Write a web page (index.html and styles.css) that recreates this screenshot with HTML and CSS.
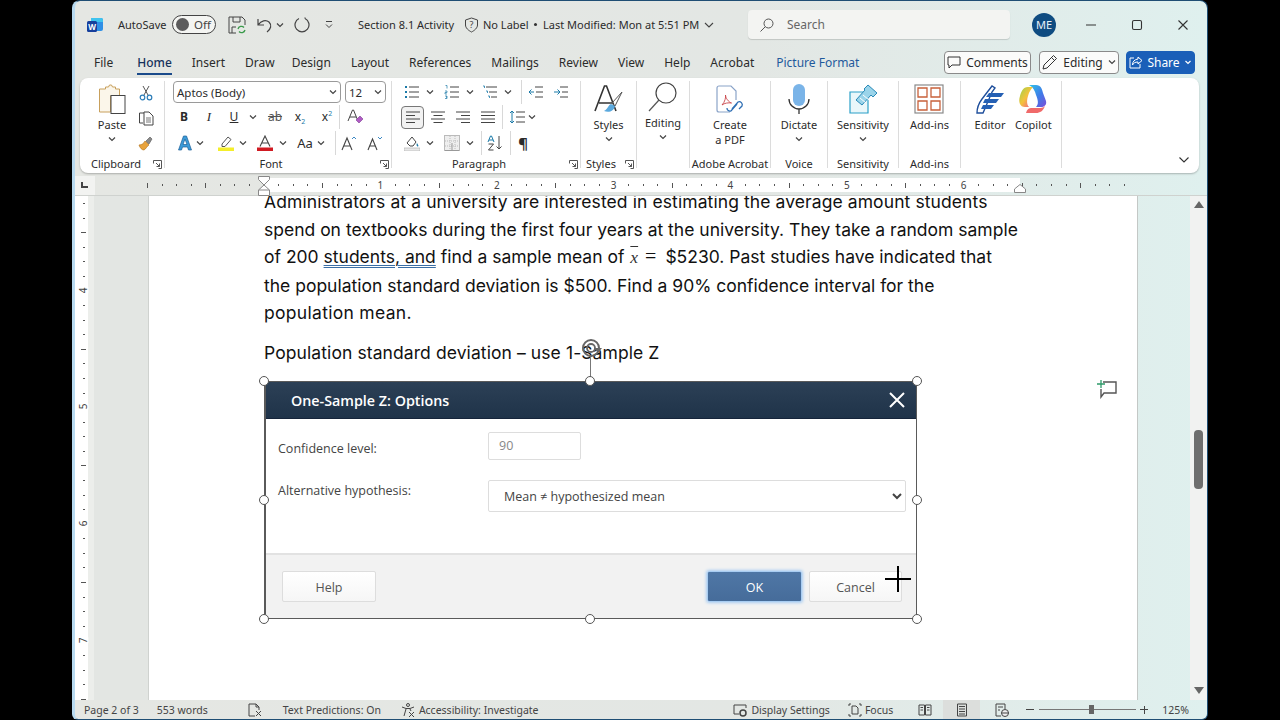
FILE: index.html
```html
<!DOCTYPE html>
<html>
<head>
  <meta charset="utf-8">
  <title>Section 8.1 Activity - Word</title>
  <link rel="stylesheet" href="styles.css">
</head>
<body>
  <svg class="sprite" aria-hidden="true">
    <defs>
      <linearGradient id="copA" x1="0" y1="0" x2="1" y2="1"><stop offset="0" stop-color="#2fc4e8"/><stop offset="0.55" stop-color="#3f7be8"/><stop offset="1" stop-color="#7a4fd8"/></linearGradient>
      <linearGradient id="copB" x1="0" y1="0" x2="1" y2="1"><stop offset="0" stop-color="#9ad34a"/><stop offset="0.5" stop-color="#f5c23c"/><stop offset="1" stop-color="#f0509a"/></linearGradient>
    </defs>
    <symbol id="chev" viewBox="0 0 8 8"><path d="M1 2.500l3 3 3-3" fill="none" stroke="#444" stroke-width="1.200"/></symbol>
    <symbol id="alignL" viewBox="0 0 16 16"><path d="M1 3h14M1 6.500h9M1 10h14M1 13.500h9" stroke="#444" fill="none"/></symbol>
    <symbol id="alignC" viewBox="0 0 16 16"><path d="M1 3h14M3.500 6.500h9M1 10h14M3.500 13.500h9" stroke="#444" fill="none"/></symbol>
    <symbol id="alignR" viewBox="0 0 16 16"><path d="M1 3h14M6 6.500h9M1 10h14M6 13.500h9" stroke="#444" fill="none"/></symbol>
    <symbol id="alignJ" viewBox="0 0 16 16"><path d="M1 3h14M1 6.500h14M1 10h14M1 13.500h14" stroke="#444" fill="none"/></symbol>
    <symbol id="launcher" viewBox="0 0 9 9"><path d="M.5 3.500v-3h8v8h-3M3 3l3.500 3.500M6.500 3.500v3h-3" fill="none" stroke="#555"/></symbol>
  </svg>

  <div class="window">
    <div class="titlebar">
      <svg class="word-logo" viewBox="0 0 16 16">
        <path d="M4 1h10a2 2 0 0 1 2 2v9a2 2 0 0 1-2 2H4z" fill="#2f8fe6"/>
        <path d="M4 1h10a2 2 0 0 1 2 2v2H4z" fill="#3fc3ee"/>
        <rect x="0" y="4" width="10" height="11" rx="1.500" fill="#17409c"/>
        <text x="5" y="12.500" class="word-w">W</text>
      </svg>
      <span class="autosave">AutoSave</span>
      <span class="toggle"><i class="knob"></i>Off</span>
      <svg class="save-ico" viewBox="0 0 18 18"><path d="M1 1h13l3 3v5M1 1v16h7M5 1v5h7V1M4 17v-6h4" fill="none" stroke="#444"/><path d="M10 13a3.500 3.500 0 0 1 6-1.500M17 14a3.500 3.500 0 0 1-6 1.500" fill="none" stroke="#3a9a4a" stroke-width="1.300"/></svg>
      <svg class="undo-ico" viewBox="0 0 16 16"><path d="M1 2v6h6M1.500 7.500C4 3.500 9 2.500 12 5c3 3 2 7-2 10" fill="none" stroke="#444" stroke-width="1.200"/></svg>
      <svg class="chev ml3"><use href="#chev"/></svg>
      <svg class="redo-ico" viewBox="0 0 16 16"><path d="M5 1.500A7 7 0 1 0 11 1.500M11 1.500V.5" fill="none" stroke="#444" stroke-width="1.200"/></svg>
      <svg class="custom-ico" viewBox="0 0 10 10"><path d="M2 1.500h6M2 4.500l3 3 3-3" fill="none" stroke="#444"/></svg>
      <span class="doc-name">Section 8.1 Activity</span>
      <svg class="shield" viewBox="0 0 15 16"><path d="M7.500 1l6 2v5c0 3-3 5.500-6 7-3-1.500-6-4-6-7V3z" fill="none" stroke="#444"/><text x="7.500" y="11" class="shield-q">?</text></svg>
      <span class="no-label">No Label</span>
      <span class="dot"></span>
      <span class="modified">Last Modified: Mon at 5:51 PM</span>
      <svg class="modified-chev" viewBox="0 0 10 8"><path d="M1 2l4 4 4-4" fill="none" stroke="#444" stroke-width="1.100"/></svg>
      <div class="search">
        <svg class="search-ico" viewBox="0 0 14 14"><circle cx="8.500" cy="5.500" r="4.500" fill="none" stroke="#555"/><path d="M5.300 8.700L.5 13.500" stroke="#555"/></svg>
        <span>Search</span>
      </div>
      <span class="avatar">ME</span>
      <svg class="win-btn min" viewBox="0 0 12 12"><path d="M1 6h10" stroke="#333" stroke-width="1.100"/></svg>
      <svg class="win-btn max" viewBox="0 0 12 12"><rect x="1.500" y="1.500" width="9" height="9" rx="1.500" fill="none" stroke="#333" stroke-width="1.100"/></svg>
      <svg class="win-btn close" viewBox="0 0 12 12"><path d="M1.500 1.500l9 9M10.500 1.500l-9 9" stroke="#333" stroke-width="1.100"/></svg>
    </div>

    <div class="tabs">
      <span class="tab">File</span>
      <span class="tab active">Home</span>
      <span class="tab">Insert</span>
      <span class="tab">Draw</span>
      <span class="tab design">Design</span>
      <span class="tab">Layout</span>
      <span class="tab">References</span>
      <span class="tab">Mailings</span>
      <span class="tab">Review</span>
      <span class="tab">View</span>
      <span class="tab">Help</span>
      <span class="tab">Acrobat</span>
      <span class="tab context">Picture Format</span>
      <div class="tab-actions">
        <button class="action comments">
          <svg viewBox="0 0 14 14"><path d="M1 2h12v8H5l-3 3v-3H1z" fill="none" stroke="#333"/></svg>Comments
        </button>
        <button class="action editing">
          <svg viewBox="0 0 16 16"><path d="M11.500 1.500l3 3L5 14l-4 1 1-4zM9.500 3.500l3 3" fill="none" stroke="#333"/></svg>Editing<svg class="chev"><use href="#chev"/></svg>
        </button>
        <button class="action share">
          <svg viewBox="0 0 14 14"><path d="M9 2l4 3.500L9 9V7C6 7 4.500 8 3.500 10 3.500 6.500 5.500 4.500 9 4zM5 3H1v10h10V9" fill="none" stroke="#fff"/></svg>Share<svg class="chev" viewBox="0 0 8 8"><path d="M1.500 3l2.500 2.500L6.500 3" fill="none" stroke="#fff" stroke-width="1.200"/></svg>
        </button>
      </div>
    </div>

    <div class="ribbon">
      <div class="group clipboard">
        <div class="group-body clip-body">
          <div class="big paste">
            <svg class="paste-ico" viewBox="0 0 28 30">
              <path d="M1.500 5h6v-2h3l1-2h2l1 2h3v2h4v7h-9v16h-11z" fill="#fbf6ea" stroke="#c8a05c"/>
              <rect x="13" y="11.500" width="14" height="18" fill="#fff" stroke="#444"/>
            </svg>
            <span>Paste</span>
            <svg class="chev"><use href="#chev"/></svg>
          </div>
          <div class="clip-tools">
            <svg class="tool-ico" viewBox="0 0 16 16"><path d="M5 1l5 9M11 1l-5 9" stroke="#555" fill="none"/><circle cx="4.500" cy="12.500" r="2.300" fill="none" stroke="#2b7cb8" stroke-width="1.200"/><circle cx="11.500" cy="12.500" r="2.300" fill="none" stroke="#2b7cb8" stroke-width="1.200"/></svg>
            <svg class="tool-ico" viewBox="0 0 16 16"><path d="M6 3H1.500v10H5M6 2h5l4 4v9H6z" fill="#fff" stroke="#444"/><path d="M8 8h5M8 10h5M8 12h5" stroke="#777"/></svg>
            <svg class="tool-ico" viewBox="0 0 16 16"><path d="M1 10c3 0 5-2 6-4l4 4c-2 1-3 4-5 5-2 0-4-2-5-5z" fill="#e8a33d" stroke="#b87a24" stroke-width=".7"/><path d="M8 6l4-4 2 2-3 5z" fill="#8a8a8a" stroke="#555" stroke-width=".6"/></svg>
          </div>
        </div>
        <div class="group-label">Clipboard<svg class="launcher"><use href="#launcher"/></svg></div>
      </div>

      <div class="group font">
        <div class="group-body stack">
          <div class="row first font-pickers">
            <div class="picker font-name">Aptos (Body)<svg class="chev"><use href="#chev"/></svg></div>
            <div class="picker font-size">12<svg class="chev"><use href="#chev"/></svg></div>
          </div>
          <div class="row">
            <b class="gl ml13">B</b>
            <i class="gl serif ml13">I</i>
            <u class="gl ml13">U</u>
            <svg class="chev ml9"><use href="#chev"/></svg>
            <s class="gl wide ml8">ab</s>
            <span class="gl ml9">x<sub>2</sub></span>
            <span class="gl ml15">x<sup>2</sup></span>
            <span class="tool-sep ml6"></span>
            <svg class="tool-ico ml7" viewBox="0 0 16 16"><path d="M1 12L5.500 1h1L11 12M3 8h6" fill="none" stroke="#444"/><path d="M9 11l4-4 3 3-4 4z" fill="#b05bc4" stroke="#7a3a90" stroke-width=".6"/></svg>
          </div>
          <div class="row">
            <svg class="tool-ico ml12" viewBox="0 0 16 16"><path d="M1.500 15L6.500 1h3l5 14h-3l-1-3h-5l-1 3zM6 9.500h4L8 4z" fill="#3b9bd8" stroke="#1c5f98" stroke-width=".7"/></svg>
            <svg class="chev ml3"><use href="#chev"/></svg>
            <svg class="tool-ico ml14" viewBox="0 0 16 16"><path d="M4 9l6-7 3 2.500-6 7H4z" fill="none" stroke="#555"/><rect x="0" y="12.500" width="16" height="3.500" fill="#f4ee2a"/></svg>
            <svg class="chev ml5"><use href="#chev"/></svg>
            <svg class="tool-ico ml10" viewBox="0 0 16 16"><path d="M3 11.500L8 1l5 10.500M4.800 8h6.400" fill="none" stroke="#444" stroke-width="1.100"/><rect x="0" y="12.500" width="16" height="3.500" fill="#d01a22"/></svg>
            <svg class="chev ml6"><use href="#chev"/></svg>
            <span class="gl case ml9">Aa</span>
            <svg class="chev ml3"><use href="#chev"/></svg>
            <span class="tool-sep ml10"></span>
            <svg class="tool-ico ml5" viewBox="0 0 16 16"><path d="M1 15L6 3l5 12M3 11h6" fill="none" stroke="#444" stroke-width="1.100"/><path d="M11 4l2-2 2 2" fill="none" stroke="#3b88c4"/></svg>
            <svg class="tool-ico ml10" viewBox="0 0 16 16"><path d="M1 15L5.500 4 10 15M3 11h5" fill="none" stroke="#444" stroke-width="1.100"/><path d="M11 2l2 2 2-2" fill="none" stroke="#3b88c4"/></svg>
          </div>
        </div>
        <div class="group-label">Font<svg class="launcher"><use href="#launcher"/></svg></div>
      </div>

      <div class="group paragraph">
        <div class="group-body stack">
          <div class="row first">
            <svg class="tool-ico ml12" viewBox="0 0 16 16"><path d="M5 3h10M5 8h10M5 13h10" stroke="#444"/><path d="M1 2h2v2H1zM1 7h2v2H1zM1 12h2v2H1z" fill="#1b7aa8"/></svg>
            <svg class="chev ml6"><use href="#chev"/></svg>
            <svg class="tool-ico ml10" viewBox="0 0 16 16"><path d="M6 3h9M6 8h9M6 13h9" stroke="#444"/><path d="M1.500 1.500h1.500v3M1 7h2v1.500H1V10h2M1 12h2v1h-1 1v1.500H1" fill="none" stroke="#1b7aa8" stroke-width=".7"/></svg>
            <svg class="chev ml6"><use href="#chev"/></svg>
            <svg class="tool-ico ml8" viewBox="0 0 16 16"><path d="M4 3h11M7 8h8M9 13h6" stroke="#444"/><path d="M1 2h1.500v2M4 7h1.500v2M6 12h1.500v2" fill="none" stroke="#1b7aa8" stroke-width=".8"/></svg>
            <svg class="chev ml6"><use href="#chev"/></svg>
            <span class="tool-sep ml9"></span>
            <svg class="tool-ico ml6" viewBox="0 0 16 16"><path d="M7 3h8M8 8h7M7 13h8" stroke="#444"/><path d="M6 8H1M3.500 5.500L1 8l2.500 2.500" fill="none" stroke="#1b7aa8"/></svg>
            <svg class="tool-ico ml9" viewBox="0 0 16 16"><path d="M7 3h8M9 8h6M7 13h8" stroke="#444"/><path d="M1 8h6M4.500 5.500L7 8l-2.500 2.500" fill="none" stroke="#1b7aa8"/></svg>
          </div>
          <div class="row">
            <span class="selected-tool ml9"><svg class="tool-ico"><use href="#alignL"/></svg></span>
            <svg class="tool-ico ml6"><use href="#alignC"/></svg>
            <svg class="tool-ico ml9"><use href="#alignR"/></svg>
            <svg class="tool-ico ml9"><use href="#alignJ"/></svg>
            <span class="tool-sep ml6"></span>
            <svg class="tool-ico ml6" viewBox="0 0 16 16"><path d="M7 3h9M7 8h9M7 13h9" stroke="#444"/><path d="M3 2v12M1 4l2-2 2 2M1 12l2 2 2-2" fill="none" stroke="#1b7aa8"/></svg>
            <svg class="chev ml3"><use href="#chev"/></svg>
          </div>
          <div class="row">
            <svg class="tool-ico ml12" viewBox="0 0 16 16"><path d="M3 8l5-6 4 5-3 4H6z" fill="#fff" stroke="#444"/><path d="M13 8c1 2 2 3 1 3.500S12 10 13 8z" fill="#1b7aa8"/><rect x="0" y="13" width="16" height="3" fill="#e8e8e8" stroke="#aaa" stroke-width=".6"/></svg>
            <svg class="chev ml6"><use href="#chev"/></svg>
            <svg class="tool-ico ml10" viewBox="0 0 16 16"><rect x=".5" y=".5" width="15" height="15" fill="#eee" stroke="#bbb"/><path d="M1 6h14M1 11h14M6 1v14M11 1v14" stroke="#bbb" stroke-dasharray="1 1"/><path d="M1 15.500h14M8 8v7" stroke="#999"/></svg>
            <svg class="chev ml6"><use href="#chev"/></svg>
            <span class="tool-sep ml7"></span>
            <svg class="tool-ico ml5" viewBox="0 0 16 16"><path d="M12 1v13M9.500 11.500L12 14l2.500-2.500" fill="none" stroke="#444"/><path d="M1 7l2.500-6h1L7 7M2 5h4" fill="none" stroke="#1b7aa8"/><path d="M1.500 9h5l-5 6h5" fill="none" stroke="#444"/></svg>
            <span class="tool-sep ml7"></span>
            <span class="gl pilcrow ml6">¶</span>
          </div>
        </div>
        <div class="group-label">Paragraph<svg class="launcher"><use href="#launcher"/></svg></div>
      </div>

      <div class="group styles">
        <div class="group-body">
          <div class="big">
            <svg class="big-ico" viewBox="0 0 30 30">
              <path d="M1 27L10.500 2h2L22 27M5 19h13" fill="none" stroke="#333" stroke-width="1.600"/>
              <path d="M28 8L18 19l3 3z" fill="none" stroke="#555"/>
              <path d="M17 20c-3 1-3 5-7 7 5 2 10 0 11-5z" fill="#5aa9de"/>
            </svg>
            <span>Styles</span>
            <svg class="chev"><use href="#chev"/></svg>
          </div>
        </div>
        <div class="group-label label-left">Styles<svg class="launcher"><use href="#launcher"/></svg></div>
      </div>

      <div class="group editing-group">
        <div class="group-body">
          <div class="big raise">
            <svg class="big-ico" viewBox="0 0 30 30"><circle cx="18" cy="11" r="10" fill="#fff" stroke="#444" stroke-width="1.200"/><path d="M11 18L1 29" stroke="#555" stroke-width="1.200"/></svg>
            <span>Editing</span>
            <svg class="chev"><use href="#chev"/></svg>
          </div>
        </div>
        <div class="group-label"></div>
      </div>

      <div class="group acrobat">
        <div class="group-body">
          <div class="big">
            <svg class="big-ico" viewBox="0 0 30 30">
              <path d="M2 4a2 2 0 0 1 2-2h12l5 5v9M2 4v22a2 2 0 0 0 2 2h11" fill="none" stroke="#8aa3c8" stroke-width="1.200"/>
              <path d="M7 21c3-3 4-8 3.500-10 0 3 3 7 6 8-3-.5-7 0-9.500 2z" fill="none" stroke="#c8454a" stroke-width=".9"/>
              <path d="M17 25l6-7a3 3 0 0 1 4 4l-3 3M22 20l-6 7a3 3 0 0 1-4-3" fill="none" stroke="#2f6fb4" stroke-width="1.300"/>
            </svg>
            <span>Create<br>a PDF</span>
          </div>
        </div>
        <div class="group-label">Adobe Acrobat</div>
      </div>

      <div class="group voice">
        <div class="group-body">
          <div class="big">
            <svg class="big-ico" viewBox="0 0 30 30">
              <rect x="9" y="0" width="12" height="22" rx="6" fill="#7ab4e8"/>
              <path d="M5 15a10 10 0 0 0 20 0M15 25v5" fill="none" stroke="#333" stroke-width="1.300"/>
            </svg>
            <span>Dictate</span>
            <svg class="chev"><use href="#chev"/></svg>
          </div>
        </div>
        <div class="group-label">Voice</div>
      </div>

      <div class="group sensitivity">
        <div class="group-body">
          <div class="big">
            <svg class="big-ico" viewBox="0 0 30 30">
              <path d="M20 8H2v21h18V15" fill="#eaf7fa" stroke="#2aa0c8" stroke-width="1.200"/>
              <path d="M20 1l9 8-4 4-2-2-9 10-6-5 9-10-1-1z" fill="#9ad4ea" stroke="#2a8ab8"/>
              <path d="M12 14l6 5M15 11l6 5" stroke="#fff"/>
            </svg>
            <span>Sensitivity</span>
            <svg class="chev"><use href="#chev"/></svg>
          </div>
        </div>
        <div class="group-label">Sensitivity</div>
      </div>

      <div class="group addins">
        <div class="group-body">
          <div class="big">
            <svg class="big-ico" viewBox="0 0 30 30">
              <rect x="1" y="1" width="28" height="28" fill="#fff" stroke="#8a8a8a" stroke-width="1.200"/>
              <path d="M4 4h9v9H4zM17 4h9v9h-9zM4 17h9v9H4zM17 17h9v9h-9z" fill="#fff" stroke="#c8603a" stroke-width="1.300"/>
            </svg>
            <span>Add-ins</span>
          </div>
        </div>
        <div class="group-label">Add-ins</div>
      </div>

      <div class="group tools-end">
        <div class="group-body end-body">
          <div class="big">
            <svg class="big-ico" viewBox="0 0 30 30">
              <path d="M2 29c0-6 2-10 5-14l10-13 3 2-3 4-9 21z" fill="#fff" stroke="#1f4f9c" stroke-width="1.400"/>
              <path d="M14 9h15l-3 4H11zM10 15h14l-3 4H8zM8 21h11l-3 4H6z" fill="#2560b4"/>
            </svg>
            <span>Editor</span>
          </div>
          <div class="big">
            <svg class="big-ico" viewBox="0 0 30 30">
              <path d="M11 1h7c5 0 6 4 7 8l3 8c1 4-2 6-5 6h-5c3-3 2-7 0-12-1-4-3-8-7-10z" fill="url(#copA)"/>
              <path d="M10 3C5 3 3 8 2 12c-2 6 0 11 5 11h4c-3-3-2-9 0-14 1-2 2-4 4-6z" fill="url(#copB)"/>
              <path d="M8 29h10c4 0 7-2 9-7-2 2-4 2-7 2h-6c-3 0-5 1-6 5z" fill="#f06a6a"/>
            </svg>
            <span>Copilot</span>
          </div>
        </div>
        <div class="group-label"></div>
      </div>
      <svg class="collapse" viewBox="0 0 12 8"><path d="M1.500 1.500L6 6l4.500-4.500" fill="none" stroke="#333" stroke-width="1.100"/></svg>
    </div>

    <div class="ruler">
      <div class="ruler-corner"><i class="tab-stop"></i></div>
      <div class="ruler-track">
        <div class="ruler-scale">
          <span><em>1</em></span><span><em>2</em></span><span><em>3</em></span><span><em>4</em></span><span><em>5</em></span><span><em>6</em></span>
        </div>
        <svg class="indent-left" viewBox="0 0 12 20"><path d="M.5.5h11v3L6 9 .5 3.500zM6 9l5.500 5v5.500H.5V14zM.5 14h11" fill="#fff" stroke="#888"/></svg>
        <svg class="indent-right" viewBox="0 0 12 9"><path d="M6 .5l5.500 4.500v3.500H.5V5z" fill="#fff" stroke="#888"/></svg>
      </div>
    </div>

    <div class="doc-area">
      <div class="vruler">
        <div class="vruler-scale">
          <span><em>4</em></span><span><em>5</em></span><span><em>6</em></span><span><em>7</em></span>
        </div>
      </div>
      <div class="gutter"></div>
      <div class="page">
        <p class="para">Administrators at a university are interested in estimating the average amount students<br>
        spend on textbooks during the first four years at the university. They take a random sample<br>
        of 200 <span class="grammar">students, and</span> find a sample mean of <span class="math"><i class="xbar">x</i><span class="eq">=</span></span>$5230. Past studies have indicated that<br>
        the population standard deviation is $500. Find a 90% confidence interval for the<br>
        <span class="last-line">population mean.</span></p>
        <p class="para second">Population standard deviation – use 1-Sample Z</p>

        <div class="picture">
          <div class="dialog">
            <div class="dialog-head">
              <span>One-Sample Z: Options</span>
              <svg viewBox="0 0 16 16"><path d="M1 1l14 14M15 1L1 15" stroke="#fff" stroke-width="2"/></svg>
            </div>
            <div class="dialog-body">
              <div class="field">
                <label>Confidence level:</label>
                <input class="level" type="text" value="90">
              </div>
              <div class="field field-alt">
                <label>Alternative hypothesis:</label>
                <select class="alt"><option>Mean ≠ hypothesized mean</option></select>
              </div>
            </div>
            <div class="dialog-foot">
              <button class="dlg-btn">Help</button>
              <button class="dlg-btn ok">OK</button>
              <button class="dlg-btn cancel">Cancel</button>
            </div>
          </div>
          <span class="rot-line"></span>
          <svg class="rot-handle" viewBox="0 0 22 22"><circle cx="10" cy="10" r="8" fill="none" stroke="#666" stroke-width="2"/><circle cx="10" cy="10" r="4" fill="none" stroke="#666" stroke-width="1.800"/><path d="M13 10h8l-4 5z" fill="#666"/></svg>
          <i class="handle tl"></i><i class="handle tc"></i><i class="handle tr"></i>
          <i class="handle ml"></i><i class="handle mr"></i>
          <i class="handle bl"></i><i class="handle bc"></i><i class="handle br"></i>
          <svg class="cursor" viewBox="0 0 26 26"><path d="M13 0v26M0 13h26" stroke="#000" stroke-width="2"/></svg>
        </div>
        <svg class="add-comment" viewBox="0 0 20 20"><path d="M6 3h13v11H7l-3 4v-8" fill="none" stroke="#555" stroke-width="1.400"/><path d="M4 1v8M0 5h8" stroke="#2e9a6a" stroke-width="1.300"/></svg>
      </div>
      <div class="side-pane"></div>
      <div class="scrollbar">
        <i class="arrow up"></i>
        <div class="scroll-track"><i class="thumb"></i></div>
        <i class="arrow down"></i>
      </div>
    </div>

    <div class="statusbar">
      <span class="st-page">Page 2 of 3</span>
      <span class="st-words">553 words</span>
      <svg class="st-ico st-proof" viewBox="0 0 14 14"><path d="M7 13H1V1h7l3 3v3M8 1v3h3" fill="none" stroke="#444"/><path d="M8 8l5 5M13 8l-5 5" stroke="#444"/></svg>
      <span class="st-pred">Text Predictions: On</span>
      <svg class="st-ico st-acc" viewBox="0 0 14 14"><circle cx="7" cy="2" r="1.500" fill="none" stroke="#444"/><path d="M1 4l4 1.500h4L13 4M5 6l-2 7M9 6l1 2" fill="none" stroke="#444"/><path d="M8 9l5 5M13 9l-5 5" stroke="#444"/></svg>
      <span class="st-acc-text">Accessibility: Investigate</span>
      <div class="st-right">
        <svg class="st-ico" viewBox="0 0 14 14"><path d="M1 11V2h12v3M1 11h5" fill="none" stroke="#444"/><circle cx="10" cy="10" r="3" fill="none" stroke="#444" stroke-width="1.500"/></svg>
        <span class="st-display">Display Settings</span>
        <svg class="st-ico st-focus" viewBox="0 0 14 14"><path d="M1 3V1h2M11 1h2v2M1 11v2h2M11 13h2v-2M4 3h4l2 2v6H4z" fill="none" stroke="#444"/></svg>
        <span class="st-focus-text">Focus</span>
        <svg class="st-ico st-read" viewBox="0 0 14 14"><path d="M1 2h5.500v10H1zM7.500 2H13v10H7.500z" fill="none" stroke="#444"/><path d="M2.500 4.500h2.500M2.500 7h2.500M9 4.500h2.500M9 7h2.500" stroke="#444"/></svg>
        <span class="st-print"><svg class="st-ico" viewBox="0 0 14 14"><path d="M2.500 1h9v12h-9z" fill="none" stroke="#444"/><path d="M4 3.500h6M4 6h6M4 8.500h6M4 11h6" stroke="#444"/></svg></span>
        <svg class="st-ico st-web" viewBox="0 0 14 14"><path d="M6 13H1V1h9v5M3 4h5M3 7h2" fill="none" stroke="#444"/><circle cx="10" cy="10" r="3.500" fill="#eee" stroke="#444"/><path d="M6.500 10h7" stroke="#444"/></svg>
        <span class="zoom-minus"></span>
        <div class="zoom-slider"><i></i></div>
        <span class="zoom-plus"></span>
        <span class="zoom-pct">125%</span>
      </div>
    </div>
  </div>
</body>
</html>
```

FILE: styles.css
```css
* {
  margin: 0;
  padding: 0;
  box-sizing: border-box;
}
body {
  width: 1280px;
  height: 720px;
  background: #000;
  font-family: "Noto Sans", "Open Sans", sans-serif;
  font-size: 12px;
  color: #2b2b2b;
  overflow: hidden;
}
.sprite {
  position: absolute;
  width: 0;
  height: 0;
}
.window {
  width: 1136px;
  height: 720px;
  margin-left: 72px;
  display: flex;
  flex-direction: column;
  overflow: hidden;
  background: linear-gradient(90deg, #e5e7e3, #e3e7e4 60%, #dff0ee);
  border-top: 1px solid #1f4e74;
  border-left: 3px solid #b8daf0;
  border-right: 1px solid #1f4e74;
  border-bottom: 1px solid #1f4e74;
  border-radius: 8px 8px 6px 6px;
}
svg {
  display: block;
  flex: none;
}
.chev {
  width: 8px;
  height: 8px;
}
.ml3 { margin-left: 3px; }
.ml5 { margin-left: 5px; }
.ml6 { margin-left: 6px; }
.ml7 { margin-left: 7px; }
.ml8 { margin-left: 8px; }
.ml9 { margin-left: 9px; }
.ml10 { margin-left: 10px; }
.ml12 { margin-left: 12px; }
.ml13 { margin-left: 13px; }
.ml14 { margin-left: 14px; }
.ml15 { margin-left: 15px; }

/* title bar */
.titlebar {
  height: 47px;
  flex: none;
  display: flex;
  align-items: center;
  padding-left: 12px;
  font-size: 11px;
  white-space: nowrap;
}
.titlebar span {
  flex: none;
}
.word-logo {
  width: 16px;
  height: 16px;
}
.word-w {
  font-size: 8px;
  font-weight: 700;
  fill: #fff;
  text-anchor: middle;
}
.autosave {
  margin-left: 15px;
  width: 54px;
}
.toggle {
  width: 44px;
  height: 19px;
  border: 1px solid #444;
  border-radius: 10px;
  background: #f4f5f2;
  display: flex;
  align-items: center;
  padding-left: 3px;
  gap: 5px;
  font-size: 11.5px;
  color: #444;
}
.knob {
  width: 13px;
  height: 13px;
  border-radius: 50%;
  background: #5c5c5c;
}
.save-ico { width: 18px; height: 18px; margin-left: 12px; }
.undo-ico { width: 16px; height: 16px; margin-left: 11px; }
.redo-ico { width: 16px; height: 16px; margin-left: 10px; }
.custom-ico { width: 10px; height: 10px; margin-left: 14px; }
.doc-name { margin-left: 24px; width: 97px; }
.shield {
  width: 15px;
  height: 16px;
  margin-left: 9px;
}
.shield-q {
  font-size: 9px;
  fill: #444;
  text-anchor: middle;
}
.no-label { margin-left: 4px; width: 45px; }
.dot {
  width: 3px;
  height: 3px;
  border-radius: 50%;
  background: #333;
  margin-left: 6px;
}
.modified { margin-left: 6px; width: 156px; }
.modified-chev {
  width: 10px;
  height: 8px;
  margin-left: 5px;
}
.search {
  width: 262px;
  height: 29px;
  flex: none;
  margin-left: 34px;
  background: #f3f4f2;
  border-radius: 4px;
  box-shadow: 0 1px 1px rgba(0, 0, 0, 0.15);
  display: flex;
  align-items: center;
  padding-left: 12px;
  color: #666;
  font-size: 12px;
}
.search-ico {
  width: 14px;
  height: 14px;
  margin-right: 13px;
}
.avatar {
  width: 24px;
  height: 24px;
  margin-left: 22px;
  border-radius: 50%;
  background: #0f4c81;
  color: #e8f0f8;
  font-size: 11px;
  display: flex;
  align-items: center;
  justify-content: center;
}
.win-btn {
  width: 12px;
  height: 12px;
}
.min { margin-left: 29px; }
.max { margin-left: 34px; }
.close { margin-left: 34px; }

/* tabs */
.tabs {
  height: 28px;
  flex: none;
  display: flex;
  align-items: center;
  gap: 20px;
  padding-left: 19px;
}
.tab {
  position: relative;
  white-space: nowrap;
}
.tab.active {
  color: #16325c;
  font-weight: 500;
  margin-left: 4px;
}
.tab.active::after {
  content: "";
  position: absolute;
  left: 0;
  right: 0;
  bottom: -4px;
  height: 2px;
  background: #1a4a8a;
}
.tab.design { margin-left: -3px; }
.tab.context {
  color: #1f5a9c;
  margin-left: 2px;
}
.tab-actions {
  display: flex;
  gap: 8px;
  margin-left: auto;
  margin-right: 12px;
}
.action {
  height: 23px;
  display: flex;
  align-items: center;
  justify-content: center;
  gap: 5px;
  border: 1px solid #8a8a8a;
  border-radius: 4px;
  background: #fbfbfa;
  font: inherit;
  color: #2b2b2b;
}
.action.comments { width: 87px; }
.action.editing { width: 80px; }
.action.share { width: 69px; }
.action svg:first-child {
  width: 14px;
  height: 14px;
}
.action.editing svg:first-child {
  width: 16px;
  height: 16px;
}
.action .chev {
  width: 8px;
  height: 8px;
}
.action.share {
  margin-left: -1px;
  background: #1a5fb8;
  border-color: #1a5fb8;
  color: #fff;
  gap: 4px;
}

/* ribbon */
.ribbon {
  position: relative;
  height: 95px;
  flex: none;
  margin: 2px 8px 3px 5px;
  padding: 3px 0 5px;
  background: #fff;
  border-radius: 8px;
  box-shadow: 0 1px 2px rgba(0, 0, 0, 0.25);
  display: flex;
  font-size: 11px;
}
.group {
  display: flex;
  flex-direction: column;
  border-right: 1px solid #dcdcdc;
  flex: none;
}
.clipboard { width: 85px; }
.font { width: 227px; }
.paragraph { width: 189px; }
.styles { width: 56px; }
.editing-group { width: 53px; }
.acrobat { width: 81px; }
.voice { width: 57px; }
.sensitivity { width: 71px; }
.addins { width: 62px; }
.tools-end { width: 101px; }
.group-body {
  flex: 1;
  display: flex;
  justify-content: center;
}
.stack {
  flex-direction: column;
  justify-content: flex-start;
}
.group-label {
  position: relative;
  height: 12px;
  flex: none;
  text-align: center;
  line-height: 16px;
}
.clipboard .group-label { padding-right: 12px; }
.font .group-label,
.paragraph .group-label { padding-right: 14px; }
.label-left {
  text-align: left;
  padding-left: 5px;
}
.launcher {
  position: absolute;
  right: 2px;
  top: 4px;
  width: 9px;
  height: 9px;
}
.big {
  display: flex;
  flex-direction: column;
  align-items: center;
  padding-top: 3px;
  text-align: center;
  line-height: 15px;
}
.big.raise { padding-top: 1px; }
.big .chev { margin-top: 3px; }
.big-ico {
  width: 30px;
  height: 30px;
  margin-bottom: 3px;
}
.clip-body {
  justify-content: flex-start;
  padding-left: 12px;
}
.paste { width: 40px; }
.paste-ico {
  width: 28px;
  height: 30px;
  margin-bottom: 3px;
}
.clip-tools {
  width: 24px;
  margin-left: 2px;
  padding-top: 4px;
  display: flex;
  flex-direction: column;
  align-items: center;
  gap: 9px;
}
.tool-ico {
  width: 16px;
  height: 16px;
}
.row {
  height: 26px;
  flex: none;
  display: flex;
  align-items: center;
}
.row.first {
  height: 22px;
  margin-bottom: 1px;
}
.font-pickers {
  gap: 4px;
  padding-left: 8px;
}
.picker {
  height: 22px;
  border: 1px solid #9a9a9a;
  border-radius: 4px;
  display: flex;
  align-items: center;
  justify-content: space-between;
  padding: 0 3px;
  font-size: 11.5px;
}
.font-name { width: 168px; }
.font-size { width: 41px; }
.gl {
  width: 12px;
  flex: none;
  text-align: center;
  font-size: 12px;
  line-height: 16px;
  text-decoration-thickness: 1px;
}
.gl.serif { font-family: "Liberation Serif", serif; font-size: 13px; }
.gl.wide { width: 20px; font-size: 12px; color: #555; }
.gl.case { width: 18px; font-size: 13px; }
.gl.pilcrow { font-size: 15px; font-weight: 700; }
.gl sub, .gl sup {
  font-size: 7px;
  color: #1b7aa8;
  line-height: 0;
}
.tool-sep {
  width: 1px;
  height: 24px;
  flex: none;
  background: #d8d8d8;
}
.selected-tool {
  width: 23px;
  height: 23px;
  flex: none;
  border: 1px solid #777;
  border-radius: 4px;
  background: #f2f2f2;
  display: flex;
  align-items: center;
  justify-content: center;
}
.end-body {
  justify-content: flex-start;
  padding-left: 13px;
  gap: 9px;
}
.end-body .big:first-child { width: 32px; }
.collapse {
  position: absolute;
  right: 9px;
  bottom: 9px;
  width: 12px;
  height: 8px;
}

/* rulers */
.ruler {
  height: 20px;
  flex: none;
  display: flex;
  border-bottom: 1px solid #cfd2cf;
}
.ruler-corner {
  width: 20px;
  flex: none;
  position: relative;
  background: #f2f3f1;
}
.tab-stop {
  position: absolute;
  left: 6px;
  top: 6px;
  width: 7px;
  height: 6px;
  border-left: 2px solid #444;
  border-bottom: 2px solid #444;
}
.ruler-track {
  position: relative;
  flex: 1;
  height: 14px;
  margin-top: 2px;
  background: linear-gradient(90deg, transparent 169px, #fff 169px, #fff 925px, transparent 925px);
}
.ruler-scale {
  position: absolute;
  left: 52px;
  top: 0;
  width: 980px;
  height: 14px;
  padding-left: 175px;
  display: flex;
  background-image:
    repeating-linear-gradient(90deg, #555 0 1px, transparent 1px 14.58px),
    repeating-linear-gradient(90deg, #555 0 1px, transparent 1px 58.33px);
  background-size: 100% 2px, 100% 5px;
  background-position: 0 center;
  background-repeat: no-repeat;
}
.ruler-scale span {
  width: 116.66px;
  flex: none;
  display: flex;
  justify-content: center;
  font-size: 10px;
  line-height: 14px;
  color: #444;
}
.ruler-scale em,
.vruler-scale em {
  font-style: normal;
  background: #fff;
}
.ruler-scale em {
  padding: 0 2px;
}
.indent-left {
  position: absolute;
  left: 163px;
  top: -2px;
  width: 12px;
  height: 20px;
}
.indent-right {
  position: absolute;
  left: 919px;
  top: 6px;
  width: 12px;
  height: 9px;
}
.doc-area {
  flex: 1;
  min-height: 0;
  display: flex;
}
.vruler {
  width: 13px;
  flex: none;
  padding-left: 4px;
  background: #fff;
}
.vruler-scale {
  width: 9px;
  margin-top: 7px;
  height: 497px;
  padding-top: 29px;
  background-image:
    repeating-linear-gradient(180deg, #555 0 1px, transparent 1px 14.58px),
    repeating-linear-gradient(180deg, #555 0 1px, transparent 1px 58.33px);
  background-size: 2px 100%, 5px 100%;
  background-position: center 0, center 29px;
  background-repeat: no-repeat;
}
.vruler-scale span {
  height: 116.66px;
  display: flex;
  align-items: center;
  justify-content: center;
  font-size: 10px;
  color: #444;
}
.vruler-scale em {
  transform: rotate(-90deg);
  line-height: 9px;
}
.gutter {
  width: 61px;
  flex: none;
  background: linear-gradient(90deg, #eceeeb 6px, #e3e6e3 6px);
  border-right: 1px solid #cfd2cf;
}

/* page */
.page {
  position: relative;
  width: 988px;
  flex: none;
  background: #fff;
  padding-left: 115px;
  overflow: hidden;
  font-family: Inter, "Noto Sans", sans-serif;
  font-size: 17.5px;
  line-height: 27.6px;
  color: #111;
}
.para {
  margin-top: -8px;
  white-space: nowrap;
}
.para::first-line {
  letter-spacing: 0.09px;
}
.last-line {
  letter-spacing: 0.3px;
}
.para.second {
  margin-top: 12px;
  letter-spacing: 0.15px;
}
.grammar {
  text-decoration: underline double #3a6ea5 1px;
  text-underline-offset: 2px;
}
.math {
  font-family: "Liberation Serif", serif;
}
.xbar {
  padding: 0 1px;
  text-decoration: overline;
  text-decoration-thickness: 1px;
  color: #333;
}
.eq {
  font-size: 20px;
  margin: 0 9px 0 6px;
}
.side-pane {
  width: 53px;
  flex: none;
  border-left: 1px solid #c4c8c6;
}
.scrollbar {
  width: 17px;
  flex: none;
  display: flex;
  flex-direction: column;
  align-items: center;
  background: #f1f2f1;
  padding: 5px 0 6px;
}
.scroll-track {
  flex: 1;
  padding-top: 222px;
}
.thumb {
  display: block;
  width: 9px;
  height: 59px;
  border-radius: 4px;
  background: #6e6e6e;
}
.arrow {
  width: 0;
  height: 0;
  border-left: 5px solid transparent;
  border-right: 5px solid transparent;
}
.arrow.up { border-bottom: 7px solid #666; }
.arrow.down { border-top: 7px solid #666; }

/* picture of the options dialog */
.picture {
  position: relative;
  width: 653px;
  height: 238px;
  margin-top: 14px;
}
.dialog {
  height: 100%;
  display: flex;
  flex-direction: column;
  border: 1px solid #5a5a5a;
  border-left-width: 2px;
  font-family: "Open Sans", "Noto Sans", sans-serif;
  font-size: 12.5px;
  line-height: 1.3;
  color: #444;
}
.dialog-head {
  height: 37px;
  flex: none;
  display: flex;
  align-items: center;
  justify-content: space-between;
  padding: 3px 11px 0 25px;
  background: linear-gradient(#2c4056, #1f3349);
  border-bottom: 1px solid #15243a;
  color: #fff;
  font-size: 14.3px;
  font-weight: 600;
}
.dialog-head svg {
  width: 16px;
  height: 16px;
  margin-top: -3px;
}
.dialog-body {
  flex: 1;
  background: #fff;
  padding: 13px 10px 0 12px;
}
.field {
  display: flex;
  align-items: center;
  height: 28px;
}
.field label {
  width: 210px;
  flex: none;
  padding-top: 8px;
  color: #444;
}
.field-alt {
  align-items: flex-start;
  height: 32px;
  margin-top: 20px;
}
.field-alt label {
  padding-top: 3px;
}
.level {
  width: 93px;
  height: 28px;
  padding-left: 10px;
  border: 1px solid #ddd;
  border-radius: 2px;
  font: inherit;
  color: #888;
  background: #fff;
}
.alt {
  width: 418px;
  height: 32px;
  padding: 1px 0 0 11px;
  border: 1px solid #ddd;
  border-radius: 2px;
  font: inherit;
  color: #444;
  background: #fff;
}
.dialog-foot {
  height: 65px;
  flex: none;
  display: flex;
  align-items: center;
  padding: 0 14px 0 16px;
  background: #f2f2f2;
  border-top: 2px solid #e2e2e2;
}
.dlg-btn {
  width: 94px;
  height: 31px;
  padding-top: 4px;
  border: 1px solid #ddd;
  border-radius: 2px;
  background: linear-gradient(#fff, #f6f6f6);
  font: inherit;
  color: #555;
}
.dlg-btn.ok {
  width: 95px;
  margin-left: auto;
  background: linear-gradient(#4f77a6, #466c9a);
  border: 1px solid #a9cdf2;
  box-shadow: 0 0 3px 1px #a9cdf2;
  color: #fff;
}
.dlg-btn.cancel {
  width: 93px;
  margin-left: 7px;
}
.rot-line {
  position: absolute;
  left: 326px;
  top: -26px;
  width: 1px;
  height: 26px;
  background: #777;
}
.rot-handle {
  position: absolute;
  left: 317px;
  top: -43px;
  width: 22px;
  height: 22px;
}
.handle {
  position: absolute;
  width: 10px;
  height: 10px;
  border: 1.5px solid #555;
  border-radius: 50%;
  background: #fff;
}
.tl { left: -5px; top: -5px; }
.tc { left: 321px; top: -5px; }
.tr { right: -5px; top: -5px; }
.ml { left: -5px; top: 114px; }
.mr { right: -5px; top: 114px; }
.bl { left: -5px; bottom: -5px; }
.bc { left: 321px; bottom: -5px; }
.br { right: -5px; bottom: -5px; }
.cursor {
  position: absolute;
  left: 621px;
  top: 185px;
  width: 26px;
  height: 26px;
}
.add-comment {
  position: absolute;
  left: 948px;
  top: 183px;
  width: 20px;
  height: 20px;
}

/* status bar */
.statusbar {
  height: 19px;
  flex: none;
  display: flex;
  align-items: center;
  padding-left: 9px;
  font-size: 10.5px;
  color: #444;
}
.st-ico {
  width: 14px;
  height: 14px;
}
.st-words { margin-left: 18px; }
.st-proof { margin-left: 40px; }
.st-pred { margin-left: 21px; }
.st-acc { margin-left: 20px; }
.st-acc-text { margin-left: 4px; }
.st-right {
  display: flex;
  align-items: center;
  margin-left: auto;
  padding-right: 18px;
}
.st-display { margin-left: 4px; }
.st-focus { margin-left: 18px; }
.st-focus-text { margin-left: 3px; }
.st-read { margin-left: 25px; }
.st-print {
  width: 37px;
  height: 19px;
  margin-left: 11px;
  background: #dcdedc;
  display: flex;
  align-items: center;
  justify-content: center;
}
.st-web { margin-left: 15px; }
.zoom-minus {
  width: 8px;
  height: 1px;
  margin-left: 17px;
  background: #444;
}
.zoom-slider {
  position: relative;
  width: 97px;
  height: 1px;
  margin-left: 5px;
  background: #777;
}
.zoom-slider i {
  position: absolute;
  left: 50px;
  top: -4px;
  width: 5px;
  height: 9px;
  background: #666;
}
.zoom-plus {
  position: relative;
  width: 8px;
  height: 1px;
  margin-left: 4px;
  background: #444;
}
.zoom-plus::after {
  content: "";
  position: absolute;
  left: 3.5px;
  top: -3.5px;
  width: 1px;
  height: 8px;
  background: #444;
}
.zoom-pct { margin-left: 14px; }
```
